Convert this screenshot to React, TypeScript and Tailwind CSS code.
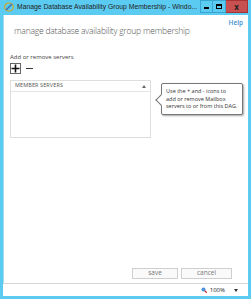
import React from "react";

export default function App() {
  const font = { fontFamily: '"Open Sans", "Noto Sans", Arial, sans-serif' };
  return (
    <div className="w-[251px] h-[299px] bg-[#5ccbf1] flex flex-col overflow-hidden" style={font}>
      {/* Title bar */}
      <div className="h-[15px] flex items-start shrink-0">
        <div className="flex items-center h-[14px] pl-[4px] gap-[3px] flex-1 min-w-0 overflow-hidden">
          <svg width="10" height="10" viewBox="0 0 10 10" className="shrink-0">
            <ellipse cx="5" cy="5" rx="4.3" ry="4" fill="none" stroke="#d9a520" strokeWidth="1.2" />
            <path d="M2 8 L8 2" stroke="#3c6fb0" strokeWidth="1.4" />
          </svg>
          <span
            className="text-[6.8px] leading-none text-[#222] whitespace-nowrap"
            style={{ fontFamily: '"Liberation Sans", Arial, sans-serif' }}
          >
            Manage Database Availability Group Membership - Windo...
          </span>
        </div>
        <div className="flex h-[14px] shrink-0 mr-[3px]">
          <div className="w-[13px] h-[13px] flex items-center justify-center border border-[#3aa6cf] bg-[#5ccbf1]">
            <div className="w-[5px] h-[2px] bg-black mt-[3px]" />
          </div>
          <div className="w-[13px] h-[13px] flex items-center justify-center border border-l-0 border-[#3aa6cf] bg-[#5ccbf1]">
            <div className="w-[6px] h-[5px] border border-black border-t-2" />
          </div>
          <div className="w-[22px] h-[13px] flex items-center justify-center bg-[#c75050] border border-l-0 border-[#a33] text-[8px] font-bold text-[#222] leading-none">
            x
          </div>
        </div>
      </div>
      {/* Window body */}
      <div className="flex-1 mx-[3px] mb-[3px] flex flex-col bg-white min-h-0">
        <div className="flex-1 relative flex flex-col min-h-0 border-l border-[#9fdcf3]">
          <div className="flex justify-end pr-[5px] pt-[5px]">
            <span className="text-[6.5px] leading-none text-[#3d8fd1] font-semibold">Help</span>
          </div>
          <div className="pl-[10px] pt-[0px] text-[8.6px] leading-none text-[#555] font-light tracking-[-0.25px]">
            manage database availability group membership
          </div>
          <div className="pl-[6px] pt-[19px] text-[6px] leading-none text-[#444]">Add or remove servers</div>
          <div className="pl-[6px] pt-[3px] flex items-center gap-[5px]">
            <div className="w-[11px] h-[11px] border border-[#666] flex items-center justify-center">
              <svg width="9" height="9" viewBox="0 0 9 9"><path d="M4.5 0.5 V8.5 M0.5 4.5 H8.5" stroke="#111" strokeWidth="1.6" /></svg>
            </div>
            <div className="w-[7px] h-[1px] bg-[#333]" />
          </div>
          <div className="flex items-start mt-[6px] pl-[6px]">
            <div className="w-[141px] h-[58px] border border-[#dedede] flex flex-col shrink-0">
              <div className="h-[11px] border-b border-[#e4e4e4] flex items-center justify-between px-[4px]">
                <span className="text-[5.5px] leading-none text-[#555] tracking-[0.1px]">MEMBER SERVERS</span>
                <svg width="4" height="3" viewBox="0 0 4 3"><path d="M0 3 L2 0 L4 3 Z" fill="#666" /></svg>
              </div>
            </div>
            <div className="relative ml-[10px] mt-[3px] w-[82px] h-[32px] border border-[#777] rounded-[2px] bg-white shadow-[1px_1px_2px_rgba(0,0,0,0.35)] pl-[4px] pr-[1px] pt-[4px]">
              <div className="absolute left-[-5px] top-[12px] w-[8px] h-[8px] bg-white border-l border-b border-[#777] rotate-45" />
              <div className="relative text-[5.5px] leading-[7.5px] text-[#333] whitespace-nowrap">
                Use the + and - icons to<br />add or remove Mailbox<br />servers to or from this DAG.
              </div>
            </div>
          </div>
          <div className="flex-1" />
          <div className="flex justify-end gap-[3px] pr-[16px] pb-[4px]">
            <div className="w-[46px] h-[11px] border border-[#cfcfcf] bg-[#fafafa] flex items-center justify-center text-[6.5px] leading-none text-[#777]">save</div>
            <div className="w-[51px] h-[11px] border border-[#cfcfcf] bg-[#fafafa] flex items-center justify-center text-[6.5px] leading-none text-[#777]">cancel</div>
          </div>
        </div>
        {/* status bar */}
        <div className="h-[13px] border-t border-[#d6d6d6] flex items-center justify-end pr-[10px] gap-[3px] shrink-0">
          <svg width="6" height="6" viewBox="0 0 6 6"><circle cx="2.5" cy="2.5" r="2" fill="#4a8fd8" /><path d="M3.8 3.8 L5.8 5.8" stroke="#c33" strokeWidth="1.3" /></svg>
          <span className="text-[6px] leading-none text-[#222]">100%</span>
          <svg width="4" height="3" viewBox="0 0 4 3" className="ml-[6px]"><path d="M0 0 L4 0 L2 3 Z" fill="#333" /></svg>
        </div>
      </div>
    </div>
  );
}
